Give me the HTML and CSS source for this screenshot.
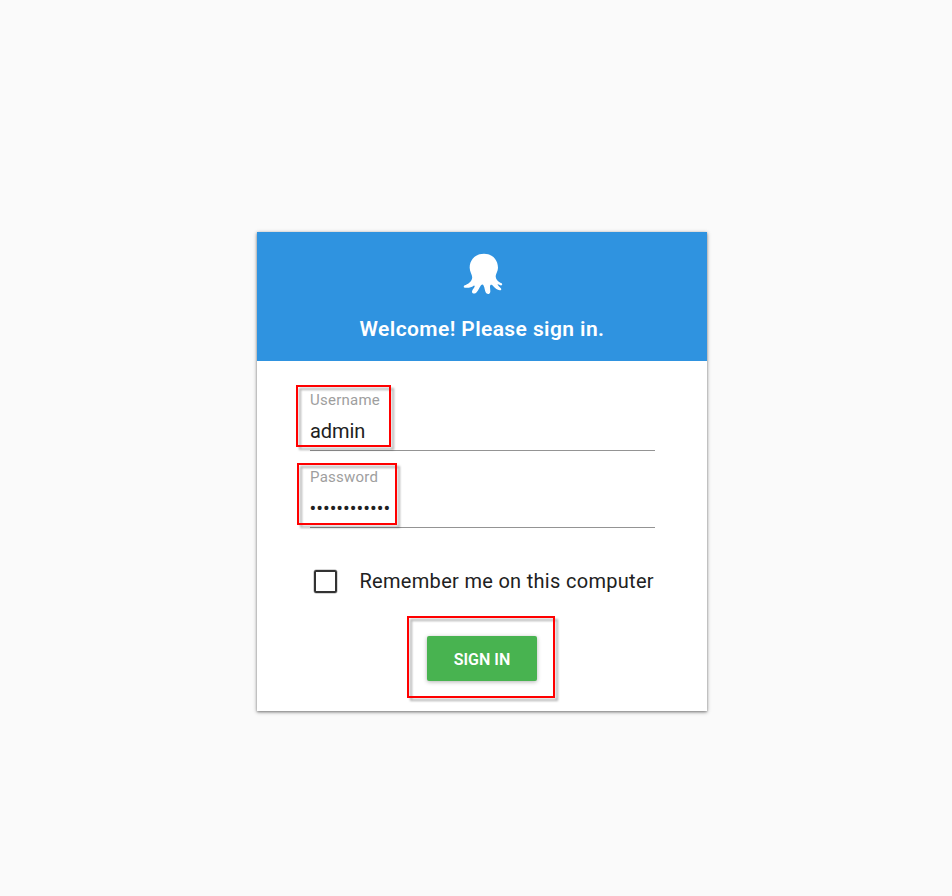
FILE: index.html
```html
<!DOCTYPE html>
<html lang="en">
<head>
<meta charset="utf-8">
<title>Sign in</title>
<link rel="stylesheet" href="styles.css">
</head>
<body>
<main class="card">
  <header class="head">
    <svg class="logo" viewBox="0 0 186 180" aria-hidden="true"><path fill="#fff" d="M96 29C71 29 53 47 53 71C53 84 63 94 60 104C57 115 47 120 38 124C32 128 36 133 45 131C53 131 59 129 65 125C68 124 69 127 67 130C64 135 60 139 60 144C61 150 70 150 74 145C80 138 83 129 87 124C90 121 93 121 95 125C98 131 98 138 101 145C104 151 112 151 114 146C117 140 112 130 115 124C117 121 121 123 124 127C130 134 136 138 143 139C149 140 149 134 145 131C140 127 136 123 137 121C140 120 143 125 149 124C153 120 149 117 145 116C137 112 131 105 131 97C131 89 138 82 138 71C138 47 120 29 96 29Z"/></svg>
    <h1 class="title">Welcome! Please sign in.</h1>
  </header>
  <form class="form">
    <div class="field"><span class="label">Username</span><span class="value">admin</span><i class="mark mark-user"></i></div>
    <div class="field"><span class="label">Password</span><span class="value dots">••••••••••••</span><i class="mark mark-pass"></i></div>
    <div class="remember"><span class="box"></span><span class="remember-text">Remember me on this computer</span></div>
    <div class="submit"><button class="button" type="button">SIGN IN</button><i class="mark mark-submit"></i></div>
  </form>
</main>
</body>
</html>
```
FILE: styles.css
```css
* { box-sizing: border-box; }
body {
  margin: 0;
  min-height: 896px;
  padding: 232px 0 0 257px;
  background: #fafafa;
  color: #212121;
  font-family: Roboto, sans-serif;
}
.card {
  width: 450px;
  height: 479px;
  background: #fff;
  box-shadow: 0 1px 4px rgba(0,0,0,.4), 0 1px 2px rgba(0,0,0,.25);
}
.head {
  height: 129px;
  padding-top: 12px;
  display: flex;
  flex-direction: column;
  align-items: center;
  background: #2f93e0;
}
.logo { width: 62px; height: 60px; margin-left: 2px; }
.title {
  margin: 11px 0 0;
  color: #fff;
  font-size: 21px;
  line-height: 28px;
  font-weight: 600;
  letter-spacing: .4px;
  white-space: nowrap;
}
.form { padding: 30px 52px 0 53px; }
.field {
  position: relative;
  display: flex;
  flex-direction: column;
  height: 60px;
  margin-bottom: 17px;
  border-bottom: 1px solid #949494;
}
.label {
  font-size: 15px;
  line-height: 18px;
  letter-spacing: .25px;
  color: #9e9e9e;
}
.value { margin-top: 10px; font-size: 20px; line-height: 24px; letter-spacing: -.1px; }
.dots { margin-left: -.5px; letter-spacing: -.03px; }
.mark {
  position: absolute;
  border: 2px solid #f00;
  filter: drop-shadow(3px 3px 1px rgba(0,0,0,.3));
}
.mark-user { left: -14px; top: -6px; width: 95px; height: 62px; }
.mark-pass { left: -13px; top: -5px; width: 100px; height: 62px; }
.mark-submit { left: 97px; top: -20px; width: 148px; height: 82px; }
.remember {
  display: flex;
  align-items: center;
  height: 24px;
  margin-top: 41px;
}
.box {
  flex: none;
  width: 23px;
  height: 23px;
  margin: 0 22.5px 0 4px;
  border: 2px solid #333;
  box-shadow: 0 0 0 .5px rgba(51,51,51,.4);
  border-radius: 2px;
}
.remember-text { font-size: 20px; line-height: 24px; letter-spacing: .3px; white-space: nowrap; }
.submit { position: relative; margin-top: 43px; padding-left: 117px; }
.button {
  display: block;
  width: 110px;
  height: 45px;
  padding: 2px 0 0;
  border: 0;
  border-radius: 2px;
  background: #48b350;
  color: #fff;
  font: 600 16px/43px Roboto, sans-serif;
  letter-spacing: 0;
  box-shadow: 0 1px 4px rgba(0,0,0,.3);
}
```
